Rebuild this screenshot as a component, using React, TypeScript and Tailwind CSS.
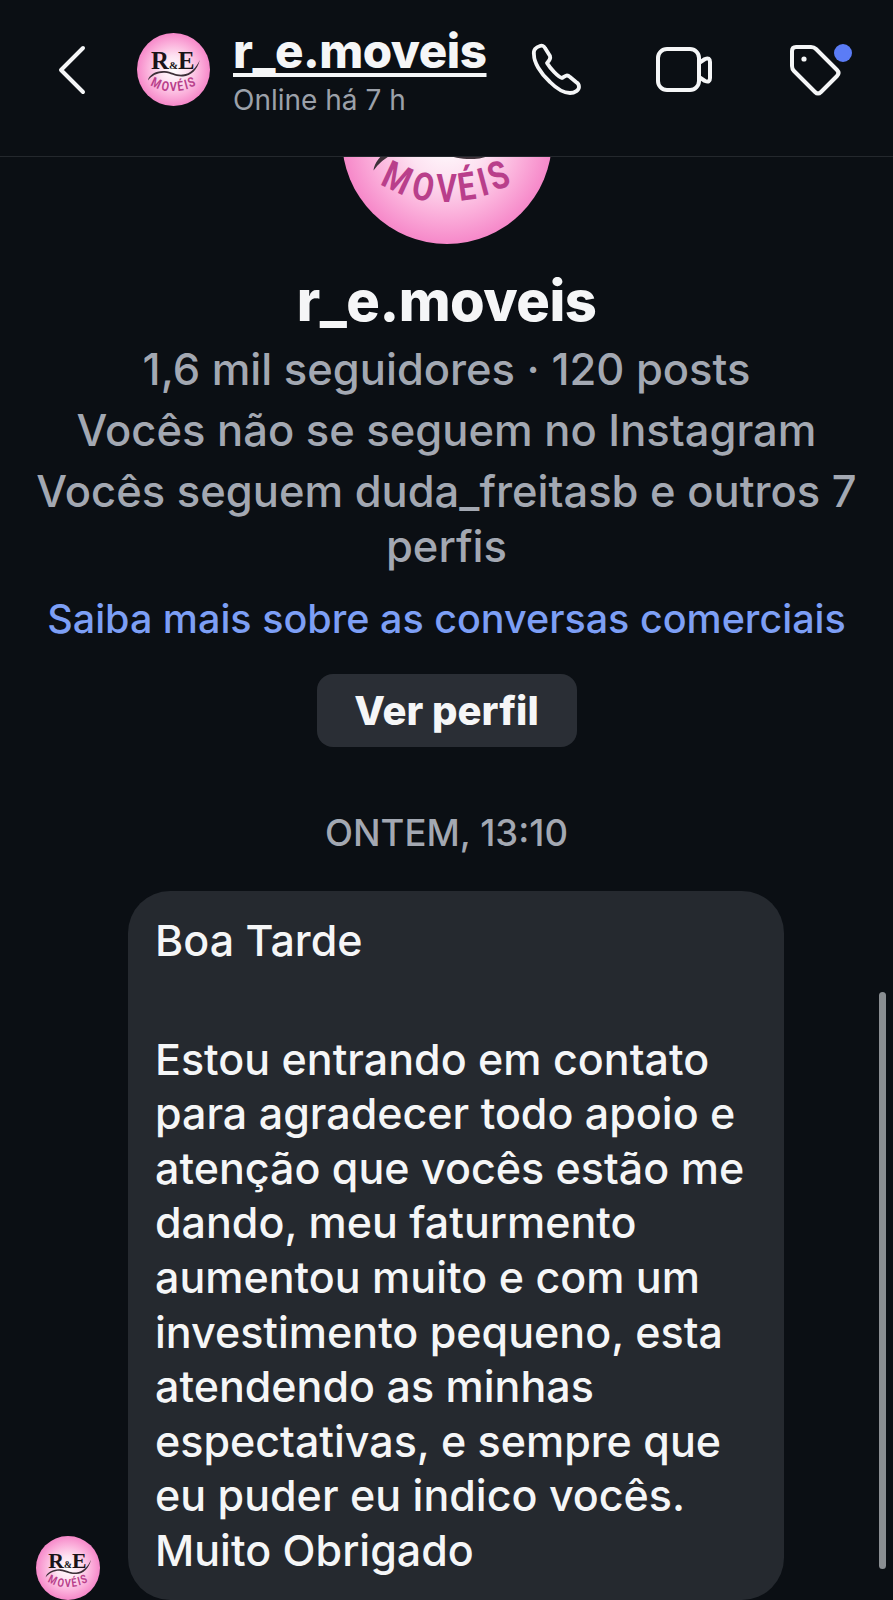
const SANS = "font-['Inter','Liberation_Sans',sans-serif]";

// Letters of the curved wordmark: baseline position and tilt of each one
const WORDMARK = [
  { ch: "M", x: 23.6, y: 74.3, r: 25 },
  { ch: "O", x: 37.4, y: 79, r: 12 },
  { ch: "V", x: 49.8, y: 79.9, r: 0 },
  { ch: "É", x: 60.2, y: 79, r: -8 },
  { ch: "I", x: 68.7, y: 76.7, r: -15 },
  { ch: "S", x: 76.8, y: 73.3, r: -22 },
];

// R&E Móveis brand mark: pink sphere, serif initials, swoosh and curved wordmark
function BrandLogo({ className }: { className: string }) {
  return (
    <svg viewBox="0 0 100 100" className={className}>
      <defs>
        <radialGradient id="brand-sphere" cx="50%" cy="50%" r="50%">
          <stop offset="0%" stopColor="#ffffff" />
          <stop offset="38%" stopColor="#fde2f1" />
          <stop offset="72%" stopColor="#fbb0db" />
          <stop offset="100%" stopColor="#f688c9" />
        </radialGradient>
      </defs>
      <circle cx="50" cy="50" r="50" fill="url(#brand-sphere)" />
      <text
        x="49"
        y="49.5"
        textAnchor="middle"
        fill="#1b1418"
        fontFamily="'Liberation Serif', serif"
        fontWeight="700"
        fontSize="34"
      >
        R<tspan fontSize="15">&amp;</tspan>E
      </text>
      <path d="M15 65 C16 57 27 51 38 52 C48 53 53 58 63 57 C73 56 81 48 86 37 C83 50 74 59 63 59.5 C52 60 47 55.5 38 54.5 C29 54 20 58 15 65 Z" fill="#3d3038" />
      {WORDMARK.map((l) => (
        <text
          key={l.ch}
          transform={`translate(${l.x} ${l.y}) rotate(${l.r}) scale(0.8 1)`}
          textAnchor="middle"
          fill="#b93f8b"
          fontFamily="'Roboto', sans-serif"
          fontWeight="700"
          fontSize="18.5"
        >
          {l.ch}
        </text>
      ))}
    </svg>
  );
}

function BackIcon() {
  return (
    <svg viewBox="0 0 34 50" className="w-[34px] h-[50px] text-[#f5f6f7]" fill="none" stroke="currentColor" strokeWidth="4" strokeLinecap="round" strokeLinejoin="round">
      <path d="M27 3 L5 25 L27 47" />
    </svg>
  );
}

function PhoneIcon() {
  return (
    <svg viewBox="0 0 70 70" className="w-[70px] h-[70px] text-[#f5f6f7]" fill="none" stroke="currentColor" strokeWidth="3.8" strokeLinejoin="round" strokeLinecap="round">
      <path d="M20 11 C16 12 13 15 14 20 C14 27 20 38 30 47 C36 53 44 58 50 58 C55 58 59 55 59 52 C59 50 58 48 56 47 L50 42 C47 39 45 41 42 43 C38 42 30 33 27 28 C29 26 31 24 30 21 L25 13 C24 11 22 10 20 11 Z" />
    </svg>
  );
}

function VideoIcon() {
  return (
    <svg viewBox="0 0 75 70" className="w-[75px] h-[70px] text-[#f5f6f7]" fill="none" stroke="currentColor" strokeWidth="4" strokeLinejoin="round" strokeLinecap="round">
      <rect x="13" y="14" width="41" height="41" rx="9" />
      <path d="M54 28 L60 24 Q65 22 65 27 V43 Q65 48 60 46 L54 42 Z" />
    </svg>
  );
}

function TagIcon() {
  return (
    <svg viewBox="0 0 75 70" className="w-[75px] h-[70px] text-[#f5f6f7]" fill="none" stroke="currentColor" strokeWidth="4" strokeLinejoin="round" strokeLinecap="round">
      <path d="M16 12 H31 Q34 12 36 14 L57 35 Q60 38 57 41 L41 57 Q38 60 35 57 L14 36 Q12 34 12 31 V16 Q12 12 16 12 Z" />
      <circle cx="24" cy="24" r="2.6" fill="currentColor" stroke="none" />
      <circle cx="63" cy="18" r="9" fill="#5b7cf6" stroke="none" />
    </svg>
  );
}

function Header() {
  return (
    <header className="relative z-10 h-[157px] shrink-0 border-b border-[#24282d] bg-[#0b0f14] flex items-start">
      <div className="ml-[56px] mt-[45px]"><BackIcon /></div>
      <div className="ml-[47px] mt-[33px]"><BrandLogo className="w-[73px] h-[73px]" /></div>
      <div className="ml-[23px] mt-[26px] w-[260px]">
        <div className="text-[47.5px] leading-[50px] font-extrabold tracking-[-0.5px] text-[#f5f6f7] underline decoration-[4px] underline-offset-[5px]">r_e.moveis</div>
        <div className="text-[28px] leading-[32px] mt-[8px] text-[#9ca1aa]">Online há 7 h</div>
      </div>
      <div className="mt-[35px] ml-[27px]"><PhoneIcon /></div>
      <div className="mt-[35px] ml-[55px]"><VideoIcon /></div>
      <div className="mt-[35px] ml-[60px]"><TagIcon /></div>
    </header>
  );
}

function ProfileIntro() {
  return (
    <section className="flex flex-col items-center text-center">
      <BrandLogo className="w-[210px] h-[210px] -mt-[123px] shrink-0" />
      <h1 className="mt-[27px] text-[56px] leading-[60px] font-extrabold tracking-[-0.5px] text-[#f5f6f7]">r_e.moveis</h1>
      <div className="mt-[11px] text-[43.5px] leading-[55px] font-medium text-[#a3a8b2] flex flex-col gap-[6px]">
        <p>1,6 mil seguidores · 120 posts</p>
        <p>Vocês não se seguem no Instagram</p>
        <p className="px-[30px]">Vocês seguem duda_freitasb e outros 7 perfis</p>
      </div>
      <a className="mt-[18px] text-[39.5px] leading-[55px] font-medium text-[#7d9ff5]">Saiba mais sobre as conversas comerciais</a>
      <button className="mt-[27px] w-[260px] h-[73px] rounded-[16px] bg-[#2a2e35] text-[40px] font-extrabold text-[#f5f6f7]">Ver perfil</button>
    </section>
  );
}

const MESSAGE_LINES = [
  "Estou entrando em contato",
  "para agradecer todo apoio e",
  "atenção que vocês estão me",
  "dando, meu faturmento",
  "aumentou muito e com um",
  "investimento pequeno, esta",
  "atendendo as minhas",
  "espectativas, e sempre que",
  "eu puder eu indico vocês.",
  "Muito Obrigado",
];

function Message() {
  return (
    <div className="mt-[38px] flex items-end pl-[36px]">
      <BrandLogo className="w-[64px] h-[64px] shrink-0" />
      <div className="ml-[28px] w-[656px] h-[709px] rounded-[42px] bg-[#25292f] pl-[27px] pr-[28px] pt-[22px] text-[43px] leading-[54.6px] font-medium text-[#f5f6f7]">
        <p>Boa Tarde</p>
        <div className="h-[64px]" />
        {MESSAGE_LINES.map((line) => (
          <p key={line} className="whitespace-nowrap">{line}</p>
        ))}
      </div>
    </div>
  );
}

export default function App() {
  return (
    <div className={`${SANS} relative w-[893px] h-[1600px] overflow-hidden bg-[#0b0f14] flex flex-col`}>
      <Header />
      <main>
        <ProfileIntro />
        <div className="mt-[66px] text-center text-[36.5px] leading-[40px] font-medium text-[#a3a8b2]">ONTEM, 13:10</div>
        <Message />
      </main>
      {/* overlay scroll indicator */}
      <div className="absolute left-[879px] top-[992px] w-[7px] h-[577px] rounded-full bg-[#8a8e92]" />
    </div>
  );
}
